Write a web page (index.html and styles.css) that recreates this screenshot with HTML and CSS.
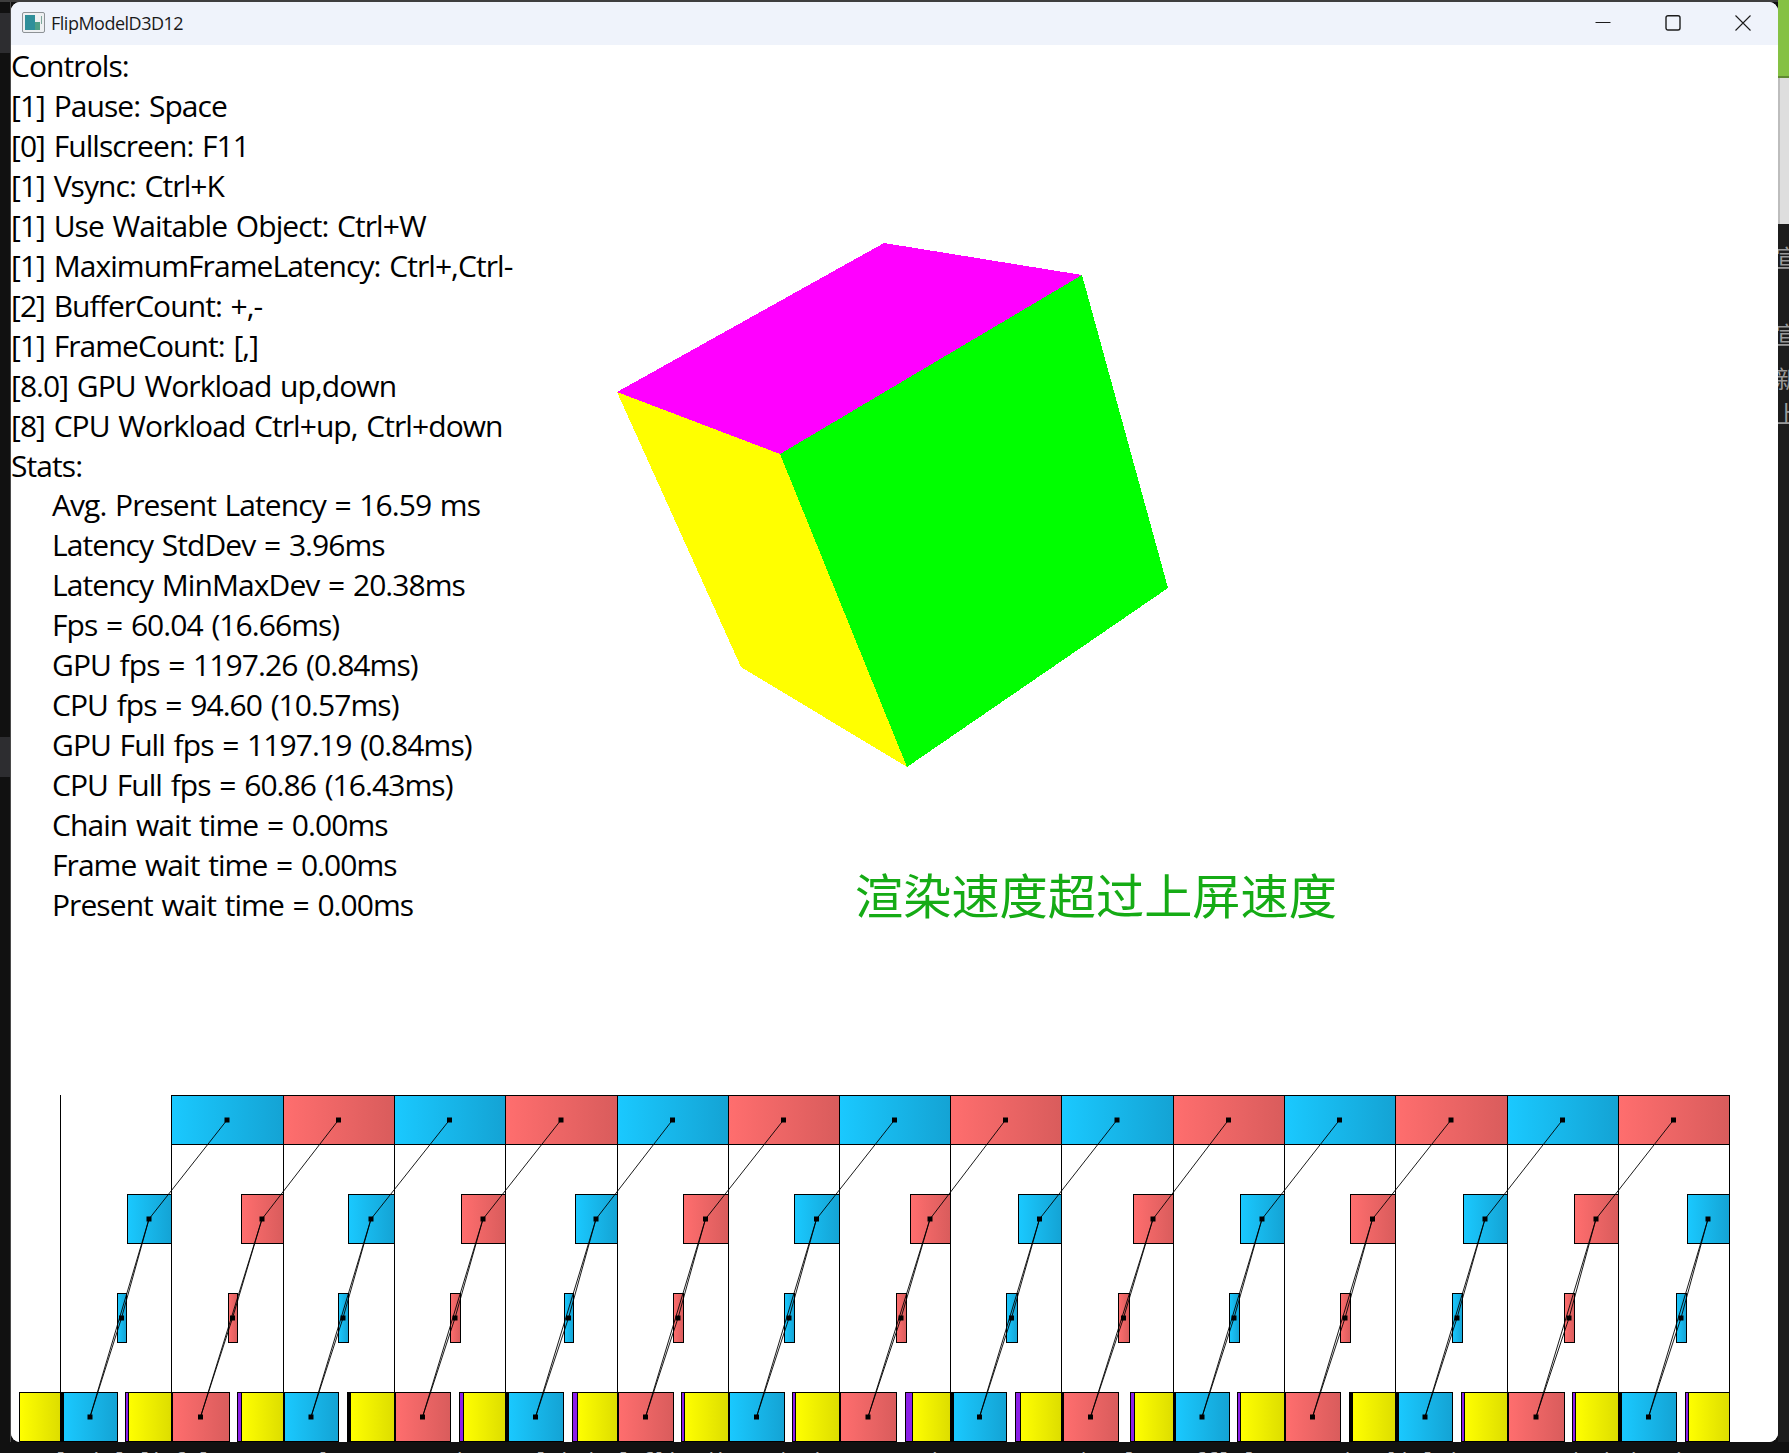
FILE: index.html
```html
<!DOCTYPE html>
<html>
<head>
  <title>FlipModelD3D12</title>
<link rel="stylesheet" href="styles.css">
</head>
<body>
  <div class="desktop">
    <div class="top-strip"><span class="clipped-text">Scheduling frames and presenting to the swapchain</span></div>

    <div class="left-strip">
      <div class="band band-one"></div>
      <div class="band band-two"></div>
    </div>

    <div class="window">
      <header class="titlebar">
        <svg class="app-icon" width="23" height="21" viewBox="0 0 23 21">
          <rect x="0.5" y="0.5" width="22" height="20" rx="1.5" fill="#eef0f2" stroke="#8d9296"/>
          <rect x="3" y="3" width="10" height="15" fill="#2f8f9a"/>
          <rect x="13" y="10" width="5" height="8" fill="#4f9f86"/>
          <rect x="19" y="4" width="1" height="8" fill="#7fa89c"/>
        </svg>
        <span class="app-title">FlipModelD3D12</span>
        <div class="caption-buttons">
          <button class="caption-button" type="button">
            <svg width="16" height="16" viewBox="0 0 16 16"><path d="M0.5 7.5H15.5" stroke="#1c1c1c" fill="none"/></svg>
          </button>
          <button class="caption-button" type="button">
            <svg width="16" height="16" viewBox="0 0 16 16"><rect x="1" y="0.7" width="14" height="14.3" rx="2" stroke="#1c1c1c" stroke-width="1.4" fill="none"/></svg>
          </button>
          <button class="caption-button" type="button">
            <svg width="16" height="16" viewBox="0 0 16 16"><path d="M0.5 0.5L15.5 15.5M15.5 0.5L0.5 15.5" stroke="#1c1c1c" stroke-width="1.1" fill="none"/></svg>
          </button>
        </div>
      </header>

      <main class="client">
        <svg id="scene" class="scene" width="1767" height="1397" viewBox="11 45 1767 1397">
          <defs>
            <linearGradient id="blue"><stop offset="0" stop-color="#1ac9ff"/><stop offset="1" stop-color="#14a3d4"/></linearGradient>
            <linearGradient id="red"><stop offset="0" stop-color="#ff6e6e"/><stop offset="1" stop-color="#d95c5c"/></linearGradient>
            <linearGradient id="yellow"><stop offset="0" stop-color="#ffff00"/><stop offset="1" stop-color="#dddd00"/></linearGradient>
          </defs>
          <g class="cube">
            <polygon points="884,243 1082,275 780,454 617,392" fill="#ff00ff"/>
            <polygon points="617,392 780,454 907,767 741,667" fill="#ffff00"/>
            <polygon points="780,454 1082,275 1168,588 907,767" fill="#00ff00"/>
          </g>
          <g id="timeline"></g>
        </svg>

        <div class="osd">
          <div class="osd-line">Controls:</div>
          <div class="osd-line">[1] Pause: Space</div>
          <div class="osd-line">[0] Fullscreen: F11</div>
          <div class="osd-line">[1] Vsync: Ctrl+K</div>
          <div class="osd-line">[1] Use Waitable Object: Ctrl+W</div>
          <div class="osd-line">[1] MaximumFrameLatency: Ctrl+,Ctrl-</div>
          <div class="osd-line">[2] BufferCount: +,-</div>
          <div class="osd-line">[1] FrameCount: [,]</div>
          <div class="osd-line">[8.0] GPU Workload up,down</div>
          <div class="osd-line">[8] CPU Workload Ctrl+up, Ctrl+down</div>
          <div class="osd-line">Stats:</div>
          <div class="osd-line stat">Avg. Present Latency = 16.59 ms</div>
          <div class="osd-line stat">Latency StdDev = 3.96ms</div>
          <div class="osd-line stat">Latency MinMaxDev = 20.38ms</div>
          <div class="osd-line stat">Fps = 60.04 (16.66ms)</div>
          <div class="osd-line stat">GPU fps = 1197.26 (0.84ms)</div>
          <div class="osd-line stat">CPU fps = 94.60 (10.57ms)</div>
          <div class="osd-line stat">GPU Full fps = 1197.19 (0.84ms)</div>
          <div class="osd-line stat">CPU Full fps = 60.86 (16.43ms)</div>
          <div class="osd-line stat">Chain wait time = 0.00ms</div>
          <div class="osd-line stat">Frame wait time = 0.00ms</div>
          <div class="osd-line stat">Present wait time = 0.00ms</div>
        </div>

        <div class="caption-cn">渲染速度超过上屏速度</div>
      </main>
    </div>

    <div class="right-strip">
      <div class="green-tab"></div>
      <div class="light-tab"></div>
      <div class="dark-tab">
        <div class="side-glyph">宣</div>
        <div class="side-glyph gap-large">宣</div>
        <div class="side-glyph gap-mid">新</div>
        <div class="side-glyph gap-small">上</div>
      </div>
    </div>

    <div class="bottom-strip"><span class="clipped-text">[main] [info] Present latency: 16/60 Hz [Window] flip discard: (3840x2160) Present mode: [HDR off] [Composed: Flip] (VSync: 60/60) (HDR)</span></div>
  </div>

<script>
// Frame timing data, measured in page pixels.
// Each frame: [purple start, yellow start, tick, coloured start, coloured end]
const frames = [
  [null, 19, 60, 63, 117],
  [125, 128, 171, 172, 229],
  [237, 241, 283, 284, 338],
  [347, 350, 394, 395, 450],
  [459, 463, 505, 508, 563],
  [572, 577, 617, 618, 673],
  [681, 684, 728, 729, 784],
  [792, 795, 839, 840, 896],
  [905, 912, 950, 953, 1006],
  [1015, 1020, 1061, 1063, 1118],
  [1130, 1134, 1173, 1175, 1229],
  [1237, 1240, 1284, 1285, 1340],
  [1349, 1352, 1395, 1398, 1452],
  [1461, 1464, 1507, 1508, 1564],
  [1572, 1575, 1618, 1621, 1676],
  [1685, 1688, 1729, null, null]
];
const blackSpacers = [3, 12];

// Middle rows, one [start, end] per frame
const rowThree = [[117, 126], [228, 237], [338, 348], [450, 460], [564, 573], [673, 683], [784, 794], [896, 906], [1006, 1017], [1118, 1129], [1229, 1239], [1340, 1350], [1452, 1462], [1564, 1574], [1676, 1686]];
const rowTwo = [[127, 171], [241, 283], [348, 394], [461, 505], [575, 617], [683, 728], [794, 839], [910, 950], [1018, 1061], [1133, 1173], [1240, 1284], [1350, 1395], [1463, 1507], [1574, 1618], [1687, 1729]];

const rowY = [1095, 1194, 1293, 1392];
const rowHeight = 49;
const timeline = document.getElementById("timeline");

function addShape(tag, attrs) {
  const shape = document.createElementNS("http://www.w3.org/2000/svg", tag);
  for (const key in attrs) {
    shape.setAttribute(key, attrs[key]);
  }
  timeline.appendChild(shape);
}

function addBlock(start, end, row, fill) {
  addShape("rect", {
    x: start + 0.5, y: rowY[row] + 0.5, width: end - start, height: rowHeight,
    fill: fill, stroke: "#000", "stroke-width": 1
  });
}

function addLine(a, b) {
  addShape("line", { x1: a[0], y1: a[1], x2: b[0], y2: b[1], stroke: "#000", "stroke-width": 0.9 });
}

function addDot(point) {
  addShape("rect", { x: point[0] - 2.5, y: point[1] - 2.5, width: 5, height: 5, fill: "#000" });
}

// Vertical ticks
frames.forEach(function (frame) {
  addShape("rect", { x: frame[2], y: rowY[0], width: 1, height: rowY[3] - rowY[0], fill: "#000" });
});

// Blocks
frames.forEach(function (frame, i) {
  const colour = i % 2 === 0 ? "url(#blue)" : "url(#red)";
  if (frame[0] !== null) {
    addBlock(frame[0], frame[1], 3, blackSpacers.includes(i) ? "#000" : "#8b1fe8");
  }
  addBlock(frame[1], frame[2], 3, "url(#yellow)");
  if (frame[3] === null) {
    return;
  }
  addShape("rect", { x: frame[2], y: rowY[3], width: frame[3] - frame[2], height: rowHeight + 1, fill: "#000" });
  addBlock(frame[3], frame[4], 3, colour);
  addBlock(rowThree[i][0], rowThree[i][1], 2, colour);
  addBlock(rowTwo[i][0], rowTwo[i][1], 1, colour);
  if (i < frames.length - 2) {
    addBlock(frames[i + 1][2], frames[i + 2][2], 0, colour);
  }
});

// Lines and dots that follow each frame up the rows
rowTwo.forEach(function (two, i) {
  const bottom = [(frames[i][3] + frames[i][4]) / 2, rowY[3] + 25];
  const third = [(rowThree[i][0] + rowThree[i][1]) / 2, rowY[2] + 25];
  const second = [(two[0] + two[1]) / 2, rowY[1] + 25];
  addLine(bottom, third);
  addLine(third, second);
  addLine(bottom, second);
  addDot(bottom);
  addDot(third);
  addDot(second);
  if (i < frames.length - 2) {
    const top = [(frames[i + 1][2] + frames[i + 2][2]) / 2, rowY[0] + 25];
    addLine(second, top);
    addDot(top);
  }
});
</script>
</body>
</html>
```

FILE: styles.css
```css
html,
body {
  margin: 0;
  padding: 0;
  background-color: #111;
  overflow: hidden;
}

.desktop {
  display: grid;
  grid-template-columns: 11px 1767px 11px;
  grid-template-rows: 2px 1440px 11px;
  width: 1789px;
  height: 1453px;
  font-family: "Open Sans", "Noto Sans", sans-serif;
}

.top-strip {
  grid-column: 1 / 4;
  background-color: #3e3e3e;
  overflow: hidden;
  display: flex;
  align-items: flex-end;
  padding-left: 80px;
}

.left-strip {
  background-color: #111;
  position: relative;
  border-right: 1px solid #4a4a4a;
  box-sizing: border-box;
}

.band {
  background-color: #2d2d30;
  height: 40px;
}

.band-one {
  margin-top: 11px;
}

.band-two {
  margin-top: 684px;
}

.window {
  display: flex;
  flex-direction: column;
  background-color: #fff;
  border-radius: 9px;
  overflow: hidden;
}

.titlebar {
  display: flex;
  align-items: center;
  box-sizing: border-box;
  height: 43px;
  flex-shrink: 0;
  padding-left: 11px;
  padding-bottom: 2px;
  background-color: #eff3fb;
  color: #1a1a1a;
}

.app-icon {
  flex-shrink: 0;
}

.app-title {
  margin-left: 6px;
  font-size: 18px;
  letter-spacing: -0.5px;
}

.caption-buttons {
  display: flex;
  margin-left: auto;
}

.caption-button {
  display: flex;
  align-items: center;
  justify-content: center;
  width: 70px;
  height: 41px;
  padding: 0;
  border: none;
  background: none;
}

.client {
  position: relative;
  flex-grow: 1;
  background-color: #fff;
}

.scene {
  position: absolute;
  top: 0;
  left: 0;
}

.cube {
  shape-rendering: crispEdges;
}

.osd {
  position: relative;
  display: flex;
  flex-direction: column;
  padding-top: 1px;
  font-size: 30px;
  line-height: 39.95px;
  color: #000;
  letter-spacing: -0.93px;
  word-spacing: 1.8px;
  white-space: pre;
}

.stat {
  padding-left: 41px;
}

.caption-cn {
  position: absolute;
  top: 821px;
  left: 844px;
  font-family: "Noto Sans CJK SC", sans-serif;
  font-size: 48.2px;
  line-height: 54px;
  color: #15ab15;
  white-space: nowrap;
}

.right-strip {
  display: flex;
  flex-direction: column;
  grid-row: 2 / 3;
  grid-column: 3;
  margin-top: -2px;
  height: 1442px;
  overflow: hidden;
}

.green-tab {
  height: 78px;
  flex-shrink: 0;
  background-color: #85c144;
  border-bottom: 2px solid #5f8a32;
  box-sizing: border-box;
}

.light-tab {
  height: 146px;
  flex-shrink: 0;
  background-color: #dedede;
  border-left: 2px solid #bdbdbd;
  box-sizing: border-box;
}

.dark-tab {
  flex-grow: 1;
  padding-top: 18px;
  background-color: #1c1c1c;
  font-family: "Noto Sans CJK SC", sans-serif;
  font-size: 24px;
  line-height: 30px;
  color: #9a9a9a;
}

.side-glyph {
  margin-left: -3px;
  white-space: nowrap;
}

.gap-large {
  margin-top: 47px;
}

.gap-mid {
  margin-top: 14px;
}

.gap-small {
  margin-top: 5px;
}

.bottom-strip {
  grid-column: 1 / 4;
  grid-row: 3;
  background-color: #111;
  overflow: hidden;
  padding: 8px 0 0 54px;
}

.clipped-text {
  color: #b5b5b5;
  font-family: "Liberation Mono", monospace;
  font-size: 20px;
  line-height: 24px;
  white-space: nowrap;
}

.top-strip .clipped-text {
  color: #a0a0a0;
  font-size: 14px;
  line-height: 20px;
}
```
